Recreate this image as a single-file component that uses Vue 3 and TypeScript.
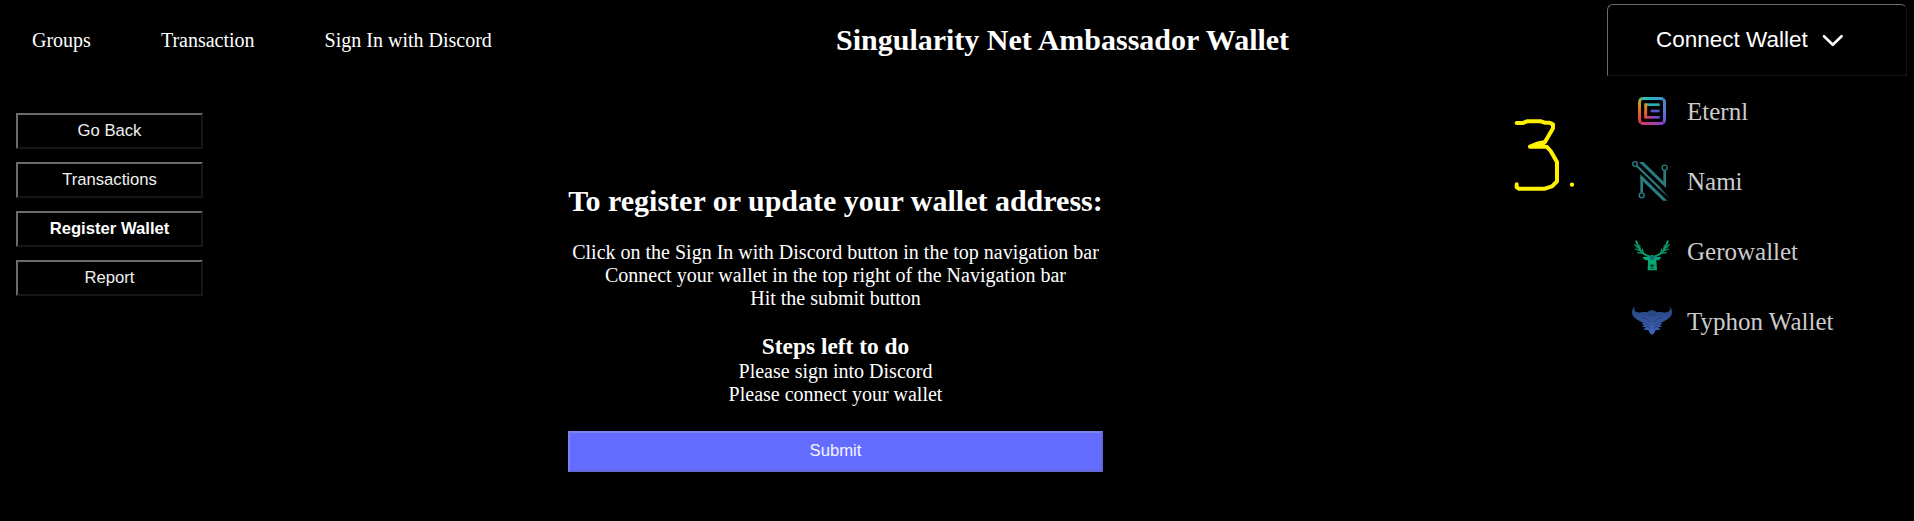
<script setup lang="ts">
import { ref } from 'vue'

interface Wallet {
  id: string
  name: string
}

const navLinks: string[] = ['Groups', 'Transaction', 'Sign In with Discord']
const sideLinks: string[] = ['Go Back', 'Transactions', 'Register Wallet', 'Report']
const activeLink = ref('Register Wallet')
const instructions: string[] = [
  'Click on the Sign In with Discord button in the top navigation bar',
  'Connect your wallet in the top right of the Navigation bar',
  'Hit the submit button',
]
const steps: string[] = ['Please sign into Discord', 'Please connect your wallet']
const wallets: Wallet[] = [
  { id: 'eternl', name: 'Eternl' },
  { id: 'nami', name: 'Nami' },
  { id: 'gero', name: 'Gerowallet' },
  { id: 'typhon', name: 'Typhon Wallet' },
]
</script>

<template>
  <div class="page">
    <nav class="nav">
      <a v-for="link in navLinks" :key="link">{{ link }}</a>
    </nav>
    <h2 class="title">Singularity Net Ambassador Wallet</h2>

    <div class="side">
      <button
        v-for="link in sideLinks"
        :key="link"
        class="side-btn"
        :class="{ active: link === activeLink }"
        @click="activeLink = link"
      >{{ link }}</button>
    </div>

    <main class="register">
      <h2>To register or update your wallet address:</h2>
      <p v-for="line in instructions" :key="line">{{ line }}</p>
      <h3>Steps left to do</h3>
      <p v-for="step in steps" :key="step">{{ step }}</p>
      <button class="submit">Submit</button>
    </main>

    <aside class="wallet">
      <button class="connect">
        <span>Connect Wallet</span>
        <svg class="chevron" width="22" height="14" viewBox="0 0 22 14">
          <path d="M2 2.2 L10.8 10.8 L19.6 2.2" fill="none" stroke="#fff" stroke-width="2.6" stroke-linecap="round" stroke-linejoin="round" />
        </svg>
      </button>
      <ul class="menu">
        <li v-for="w in wallets" :key="w.id">
          <svg v-if="w.id === 'eternl'" class="icon" viewBox="0 0 120 120">
            <defs>
              <linearGradient id="et-top" gradientUnits="userSpaceOnUse" x1="18" y1="0" x2="102" y2="0">
                <stop offset="0" stop-color="#45c39a" />
                <stop offset=".4" stop-color="#27b8c5" />
                <stop offset="1" stop-color="#4a8cd2" />
              </linearGradient>
              <linearGradient id="et-bottom" gradientUnits="userSpaceOnUse" x1="18" y1="0" x2="102" y2="0">
                <stop offset="0" stop-color="#e03a52" />
                <stop offset=".45" stop-color="#b63d96" />
                <stop offset="1" stop-color="#7547d2" />
              </linearGradient>
              <linearGradient id="et-left" gradientUnits="userSpaceOnUse" x1="0" y1="18" x2="0" y2="103">
                <stop offset="0" stop-color="#61b871" />
                <stop offset=".25" stop-color="#d59518" />
                <stop offset=".75" stop-color="#e14545" />
                <stop offset="1" stop-color="#d93a66" />
              </linearGradient>
              <linearGradient id="et-right" gradientUnits="userSpaceOnUse" x1="0" y1="18" x2="0" y2="103">
                <stop offset="0" stop-color="#4290cd" />
                <stop offset=".5" stop-color="#5776d8" />
                <stop offset="1" stop-color="#7d45cf" />
              </linearGradient>
            </defs>
            <g fill="none" stroke-width="9">
              <path d="M27 23.5 Q31 22.5 35 22.5 H85 Q90 22.5 94 25" stroke="url(#et-top)" />
              <path d="M94 25 Q97.5 28 97.5 35 V85 Q97.5 93 94 95" stroke="url(#et-right)" />
              <path d="M94 95 Q91 97.500 85 97.500 H35 Q30 97.500 26 95" stroke="url(#et-bottom)" />
              <path d="M26 95 Q22.5 92 22.5 85 V35 Q22.5 26 28 23.500" stroke="url(#et-left)" />
              <path d="M40 41 H83" stroke="#31adb2" stroke-width="8" />
              <path d="M41 37 V83" stroke="url(#et-left)" />
              <path d="M45 79 H63" stroke="#b8418a" stroke-width="8" />
              <path d="M56 60 H83" stroke="#5a58c5" stroke-width="8" />
              <path d="M62 79 H83" stroke="#754acb" stroke-width="8" />
            </g>
          </svg>
          <svg v-else-if="w.id === 'nami'" class="icon" viewBox="0 0 120 120">
            <g fill="none" stroke="#2a7c82" stroke-width="4">
              <circle cx="9" cy="9" r="7" />
              <circle cx="98" cy="20" r="7.5" />
              <circle cx="29" cy="103" r="7.5" />
              <path d="M98 28 V70" stroke-width="8" />
              <path d="M29 95 V48" stroke-width="8" />
              <path d="M14 14 L82 80" stroke-width="6" />
            </g>
            <path fill="#2a7c82" d="M21 3 H34 L102 69 V81 Z M25 40 L106 119 H93 L25 53 Z M80 75 L112 111 L77 80 Z" />
          </svg>
          <svg v-else-if="w.id === 'gero'" class="icon" viewBox="0 0 120 120">
            <defs>
              <g id="antler">
                <path fill="none" stroke="#0a9d68" stroke-width="6" stroke-linecap="round" stroke-linejoin="round" d="M54 77 Q34 71 24 57 Q16 45 13 31" />
                <path fill="none" stroke="#0a9d68" stroke-width="3.5" stroke-linecap="round" d="M18 51 L8 41 M25 60 L10 54 M31 67 L17 65 M25 57 L23 43 M34 67 L31 54" />
              </g>
            </defs>
            <use href="#antler" />
            <use href="#antler" transform="matrix(-1 0 0 1 120 0)" />
            <path fill="#08a873" d="M50 77 L60 71 L70 77 L87 78 Q84 89 73 88 L75 118 H47 L48 88 Q35 89 32 78 Z" />
            <path fill="#126f82" d="M52 76 H70 L65 87 H56 Z" />
            <path fill="none" stroke="#04593c" stroke-width="3" d="M52 101 Q60 111 69 101 M54 112 H67" />
            <circle cx="60" cy="104" r="4" fill="#034129" />
          </svg>
          <svg v-else class="icon" viewBox="0 0 120 120">
            <defs>
              <linearGradient id="ty-fill" x1="0" y1="0" x2="0" y2="1">
                <stop offset="0" stop-color="#263f76" />
                <stop offset="1" stop-color="#3f68c3" />
              </linearGradient>
            </defs>
            <path fill="url(#ty-fill)" d="M9 15 Q-5 29 2 43 Q9 55 27 62 L35 66 L27 68 L37 72 L30 77 L42 79 L34 86 L49 87 L54 97 L60 102 L66 97 L71 87 L86 86 L78 79 L90 77 L83 72 L93 68 L85 66 L93 62 Q111 55 118 43 Q125 29 111 15 Q118 29 107 33 Q98 36 84 32 L75 34 L68 29 L60 27 L52 29 L45 34 L36 32 Q22 36 13 33 Q4 29 9 15 Z" />
            <path fill="none" stroke="#182b58" stroke-opacity=".75" stroke-width="2" d="M30 50 Q46 51 56 66 M90 50 Q74 51 64 66 M38 65 L52 73 M82 65 L68 73 M42 75 L54 82 M78 75 L66 82 M50 43 L60 38 L70 43" />
          </svg>
          <span>{{ w.name }}</span>
        </li>
      </ul>
    </aside>

    <svg class="mark" viewBox="70 355 190 225" aria-label="3.">
      <g fill="none" stroke="#fff200" stroke-width="12" stroke-linejoin="round" stroke-linecap="round">
        <path d="M81 370 H99 L112 365 H154 L165 369 H180 L190 374 V386 L166 427 L145 431 L121 441 H171 L183 454 L202 487 V545 L187 560 L166 567 H88 L81 563 V554" />
        <path d="M160 434 L136 438" />
      </g>
      <circle cx="247" cy="555" r="6.500" fill="#fff200" />
    </svg>
  </div>
</template>

<style>
body {
  margin: 0;
  background: #000;
}
</style>

<style scoped>
.page {
  position: relative;
  display: grid;
  grid-template-columns: 568px 268px 267px 504px 300px;
  grid-template-rows: 113px 1fr;
  width: 1914px;
  height: 521px;
  overflow: hidden;
  background: #000;
  color: #fff;
  font: 20px/23px "Liberation Serif", "Times New Roman", serif;
  white-space: nowrap;
}

.nav {
  grid-area: 1 / 1 / 2 / 3;
  display: flex;
  gap: 70px;
  padding: 29px 0 0 32px;
}

.side {
  grid-area: 2 / 1 / 3 / 2;
  display: flex;
  flex-direction: column;
  gap: 13px;
  width: 187px;
  margin-left: 16px;
}

button {
  box-sizing: border-box;
  margin: 0;
  border-radius: 0;
  background: #000;
  color: #fff;
  font: 16.667px/19px "Liberation Sans", Arial, sans-serif;
}

.side-btn {
  height: 36px;
  padding: 0 0 1px;
  border: 2px solid;
  border-color: #6b6b6b #161616 #161616 #6b6b6b;
  color: #f0f0f0;
}

.side-btn.active {
  color: #fff;
  font-weight: bold;
}

h2,
h3,
p {
  margin: 0;
}

h2 {
  font-size: 30px;
  line-height: 34px;
}

.title {
  grid-area: 1 / 3 / 2 / 5;
  padding-top: 23px;
  text-align: left;
}

.register {
  grid-area: 2 / 2 / 3 / 4;
  display: flex;
  flex-direction: column;
  margin-top: 71px;
  text-align: center;
}

.register h2 {
  margin-bottom: 23px;
}

h3 {
  margin-top: 23px;
  font-size: 23.4px;
  line-height: 27px;
}

.submit {
  height: 41px;
  margin-top: 25px;
  padding: 0 0 2px;
  border: 2px solid;
  border-color: #7c82ea #6368d5 #6368d5 #7c82ea;
  background: #646cff;
  color: #f4f4ff;
}

.wallet {
  grid-area: 1 / 5 / 3 / 6;
  padding-top: 4px;
}

.connect {
  display: flex;
  align-items: center;
  gap: 14px;
  width: 300px;
  height: 72px;
  padding: 0 0 0 48px;
  border: 1px solid;
  border-color: #6b6b6b #161616 #161616 #6b6b6b;
  border-radius: 6px 6px 0 0;
  font-size: 22.5px;
  line-height: 26px;
}

.chevron {
  margin-top: 1px;
}

.menu {
  display: flex;
  flex-direction: column;
  margin: 0;
  padding: 0 0 0 25px;
  list-style: none;
}

.menu li {
  display: flex;
  align-items: center;
  gap: 15px;
  height: 70px;
  color: #ccc;
  font-size: 25px;
  line-height: 29px;
}

.icon {
  width: 40px;
  height: 40px;
}

.mark {
  position: absolute;
  left: 1513.3px;
  top: 118.3px;
  width: 63.3px;
  height: 75px;
}
</style>
